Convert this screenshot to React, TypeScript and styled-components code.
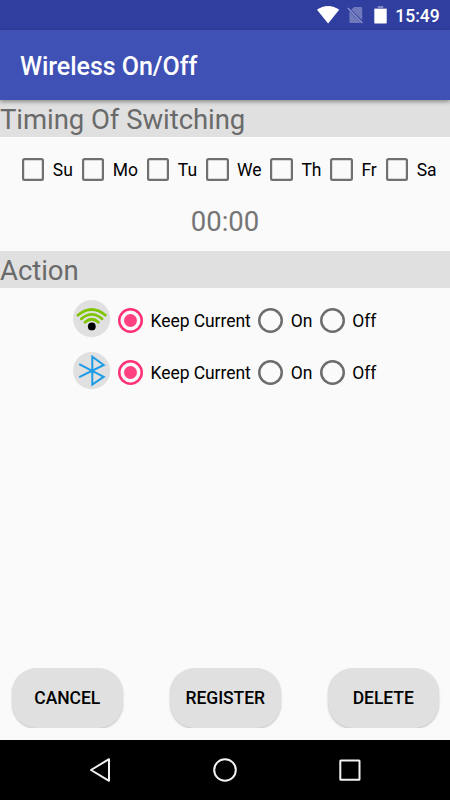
import React, { useState } from 'react';
import styled, { createGlobalStyle } from 'styled-components';

const GlobalStyle = createGlobalStyle`
  * { box-sizing: border-box; }
  body { margin: 0; background: #fafafa; font-family: Roboto, "Liberation Sans", sans-serif; }
`;

const Screen = styled.div`
  width: 450px;
  height: 800px;
  display: flex;
  flex-direction: column;
  overflow: hidden;
  background: #fafafa;
  color: #000;
`;

const StatusBar = styled.div`
  flex: none;
  height: 30px;
  background: #303f9f;
  color: #fff;
`;

const StatusIcons = styled.svg`
  display: block;
`;

const AppBar = styled.header`
  flex: none;
  position: relative;
  height: 70px;
  display: flex;
  align-items: center;
  padding: 3px 0 0 20px;
  background: #3f51b5;
  box-shadow: 0 2px 4px rgba(0, 0, 0, 0.36);
`;

const Title = styled.h1`
  margin: 0;
  color: #fff;
  font-size: 25px;
  letter-spacing: -0.04px;
  font-weight: 500;
  line-height: 30px;
  white-space: nowrap;
`;

const SectionHeader = styled.h2`
  flex: none;
  margin: 0;
  height: 37px;
  padding-top: 2px;
  background: #e0e0e0;
  color: #6a6a6a;
  font-size: 27.5px;
  letter-spacing: -0.05px;
  font-weight: 400;
  line-height: 36px;
  white-space: nowrap;
`;

const DayRow = styled.div`
  flex: none;
  display: flex;
  height: 65px;
  padding-left: 12.8px;
`;

const Option = styled.label`
  display: flex;
  align-items: center;
  font-size: 17.5px;
  letter-spacing: -0.06px;
  white-space: nowrap;
  cursor: pointer;
`;

const HiddenInput = styled.input`
  appearance: none;
  margin: 0;
  width: 0;
  height: 0;
`;

const CheckMark = styled.span<{ $checked: boolean }>`
  flex: none;
  width: 22.5px;
  height: 22.5px;
  margin: 0 8.5px 0 9px;
  box-shadow: inset 0 0 0 2.2px ${(p) => (p.$checked ? '#ff4081' : '#707070')};
  border-radius: 2.5px;
  background: ${(p) => (p.$checked ? '#ff4081' : 'transparent')};
`;

const RadioMark = styled.span<{ $checked: boolean }>`
  flex: none;
  display: grid;
  place-items: center;
  width: 25px;
  height: 25px;
  margin: 0 7.5px;
  box-shadow: inset 0 0 0 2.5px ${(p) => (p.$checked ? '#ff2f78' : '#6d6d6d')};
  border-radius: 50%;
  &::after {
    content: '';
    width: 13px;
    height: 13px;
    border-radius: 50%;
    background: ${(p) => (p.$checked ? '#ff4081' : 'transparent')};
  }
`;

const Time = styled.div`
  flex: none;
  height: 49px;
  padding-top: 2px;
  text-align: center;
  color: #757575;
  font-size: 27.5px;
  line-height: 36px;
`;

const Actions = styled.div`
  flex: 1;
  padding: 12px 0 0 73px;
`;

const ActionRow = styled.div`
  display: flex;
  align-items: flex-start;
  height: 52px;
`;

const RadioGroup = styled.div`
  display: flex;
  height: 41px;
`;

const ActionIcon = styled.svg`
  flex: none;
  width: 37.5px;
  height: 37.5px;
`;

const ButtonBar = styled.div`
  flex: none;
  display: flex;
  justify-content: space-between;
  height: 60px;
  margin: 0 12px 12px;
`;

const ButtonSlot = styled.div`
  height: 59.5px;
  width: 118px;
  margin: 0 -4px;
  padding: 0 4px;
  overflow: hidden;
`;

const PillButton = styled.button`
  width: 110.5px;
  height: 59.5px;
  padding: 1px 0 0;
  border: 0;
  border-radius: 25px;
  background: #e0e0e0;
  box-shadow: 0 1px 2px rgba(0, 0, 0, 0.24);
  color: #000;
  font-family: inherit;
  font-size: 17.5px;
  letter-spacing: -0.06px;
  font-weight: 500;
`;

const NavBar = styled.nav`
  flex: none;
  height: 60px;
  background: #000;
`;

const NavIcons = styled.svg`
  display: block;
`;

const days = ['Su', 'Mo', 'Tu', 'We', 'Th', 'Fr', 'Sa'];
const choices = ['Keep Current', 'On', 'Off'];

function Day({ label }: { label: string }) {
  const [checked, setChecked] = useState(false);
  return (
    <Option>
      <HiddenInput type="checkbox" checked={checked} onChange={() => setChecked(!checked)} />
      <CheckMark $checked={checked} />
      {label}
    </Option>
  );
}

function Action({ name, children }: { name: string; children: React.ReactNode }) {
  const [value, setValue] = useState(choices[0]);
  return (
    <ActionRow>
      <ActionIcon viewBox="0 0 37.5 37.5">
        <circle cx="18.6" cy="18.6" r="18.6" fill="#e0e0e0" />
        {children}
      </ActionIcon>
      <RadioGroup>
        {choices.map((c) => (
          <Option key={c}>
            <HiddenInput type="radio" name={name} checked={value === c} onChange={() => setValue(c)} />
            <RadioMark $checked={value === c} />
            {c}
          </Option>
        ))}
      </RadioGroup>
    </ActionRow>
  );
}

export default function App() {
  return (
    <>
      <GlobalStyle />
      <Screen>
        <StatusBar>
          <StatusIcons width="450" height="30" viewBox="0 0 450 30">
            <path d="M317 9.8C323.3 4.7 332.9 4.7 339.2 9.8L328.1 23.6Z" fill="#fff" />
            <path d="M354.2 7h6.8a1.2 1.2 0 0 1 1.2 1.2v12.1L351.2 9.6ZM349.4 11.2 361 23h-10.4a1.2 1.2 0 0 1-1.2-1.2Z" fill="#6f79bc" />
            <path d="M347.8 8 362.4 23" stroke="#8a93ca" strokeWidth="1.4" />
            <path d="M374.3 9V8h3.4V6h5.6v2h3.4v1Z" fill="#7f88c4" />
            <path d="M374.3 9h12.4v13.4a1.2 1.2 0 0 1-1.2 1.2h-10a1.2 1.2 0 0 1-1.2-1.2Z" fill="#fff" />
            <text x="395.3" y="21.8" fill="#fff" fontSize="17.5" fontWeight="500">15:49</text>
          </StatusIcons>
        </StatusBar>
        <AppBar>
          <Title>Wireless On/Off</Title>
        </AppBar>
        <SectionHeader>Timing Of Switching</SectionHeader>
        <DayRow>
          {days.map((d) => (
            <Day key={d} label={d} />
          ))}
        </DayRow>
        <Time>00:00</Time>
        <SectionHeader>Action</SectionHeader>
        <Actions>
          <Action name="wifi">
            <g fill="none" stroke="#7fc400" strokeWidth="2.7" strokeLinecap="round">
              <path d="M4.9 15.2Q18.7 3.8 32.5 15.2" />
              <path d="M8.3 18.9Q18.7 10 29.1 18.9" />
              <path d="M12 22.3Q18.7 16.2 25.4 22.3" />
            </g>
            <circle cx="18.8" cy="26.4" r="3.9" fill="#000" />
          </Action>
          <Action name="bluetooth">
            <path
              d="M6.2 12.2 30.7 24.8 19.3 32.6V4.8L30.7 13 6.2 25.2"
              fill="none"
              stroke="#1e9be6"
              strokeWidth="2"
            />
          </Action>
        </Actions>
        <ButtonBar>
          <ButtonSlot><PillButton>CANCEL</PillButton></ButtonSlot>
          <ButtonSlot><PillButton>REGISTER</PillButton></ButtonSlot>
          <ButtonSlot><PillButton>DELETE</PillButton></ButtonSlot>
        </ButtonBar>
        <NavBar>
          <NavIcons width="450" height="60" viewBox="0 0 450 60" fill="none" stroke="#f2f2f2" strokeWidth="2" strokeLinejoin="round">
            <path d="M109 19.2V40.8L91 30Z" />
            <circle cx="225" cy="30" r="10.8" />
            <rect x="340.3" y="20.5" width="19.2" height="19.2" rx="0.5" />
          </NavIcons>
        </NavBar>
      </Screen>
    </>
  );
}
